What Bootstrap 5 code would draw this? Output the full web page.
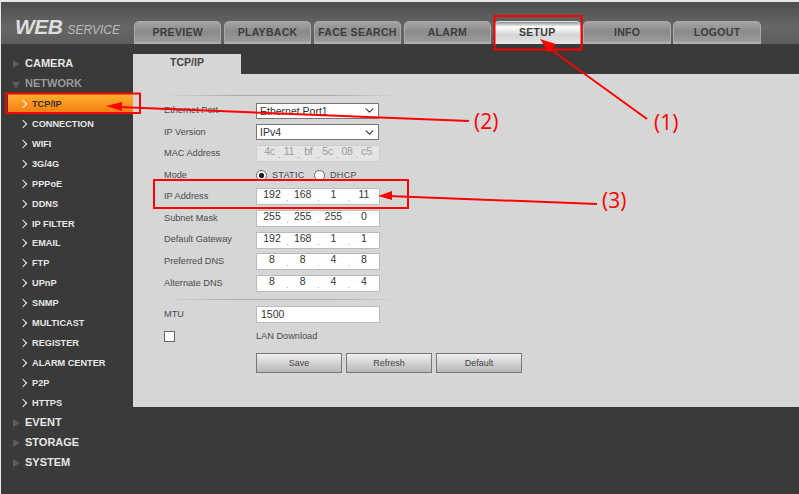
<!DOCTYPE html>
<html lang="en">
<head>
<meta charset="UTF-8">
<title>WEB SERVICE - TCP/IP</title>
<link href="https://cdn.jsdelivr.net/npm/bootstrap@5.3.0/dist/css/bootstrap.min.css" rel="stylesheet">
<style>
html, body { height: 494px; overflow: hidden; }
body { background: #3a3a3a; font-family: "Liberation Sans", Arial, sans-serif; color: #444; border-top: 2px solid #e8e8e8; border-left: 1px solid #e8e8e8; position: relative; }

.topbar { height: 42px; background: linear-gradient(#4e4e4e, #666 60%, #5e5e5e); }
.brand { width: 133px; padding: 14px 0 0 14px; color: #ddd; font-style: italic; line-height: 1; white-space: nowrap; }
.brand b { font-size: 21px; letter-spacing: -.5px; }
.brand span { font-size: 12px; margin-left: 5px; color: #bbb; }
.main-tabs { gap: 2.5px; padding-top: 19px; }
.main-tab { width: 87.4px; height: 23px; line-height: 21px; text-align: center; font-size: 10.5px; font-weight: 700; letter-spacing: .3px; white-space: nowrap; color: #3c3c3c; border-radius: 5px 5px 0 0; border: 1px solid #aaa; border-bottom: 0; background: linear-gradient(#a4a4a4, #8a8a8a 45%, #999 85%, #b8b8b8); }
.main-tab.on { background: linear-gradient(#8f8f8f, #fff 22%, #d4d4d4 60%, #e8e8e8); border-color: #ddd; }

.side { width: 132px; padding-top: 10px; flex: none; }
.side-group, .side-item { height: 19.95px; line-height: 19px; white-space: nowrap; }
.side-group { font-size: 11px; font-weight: 700; color: #e6e6e6; padding-left: 24px; position: relative; }
.side-group.open { color: #9a9a9a; }
.side-group::before { content: ""; position: absolute; left: 12px; top: 6px; border-style: solid; border-width: 4.5px 0 4.5px 7px; border-color: transparent transparent transparent #5c5c5c; }
.side-group.open::before { left: 11px; top: 8px; border-width: 7px 4.5px 0 4.5px; border-color: #5c5c5c transparent transparent transparent; }
.side-item { font-size: 9.2px; font-weight: 700; color: #e8e8e8; padding-left: 31px; position: relative; line-height: 20px; }
.side-item::before { content: ""; position: absolute; left: 19px; top: 7px; width: 6px; height: 6px; border-top: 1.5px solid #eee; border-right: 1.5px solid #eee; transform: rotate(45deg); }
.side-item.on { color: #3a3020; margin-left: 7px; padding-left: 24px; background-image: linear-gradient(#ffb030, #f57a10); }
.side-item.on::before { left: 12px; }

.panel-wrap { flex: 1; padding-top: 10px; }
.sub-tab { width: 108px; height: 20px; line-height: 17px; background: #d6d6d6; color: #444; font-size: 10.5px; font-weight: 700; text-align: center; }
.panel { background: #d6d6d6; height: 333px; padding: 21px 0 0 31px; }
.fline { height: 1px; width: 235px; background: linear-gradient(90deg, #d6d6d6, #aaa 30%, #aaa 70%, #d6d6d6); }
.fline.gap { margin: 5px 0 4px; }
.frow { height: 21.55px; font-size: 9.2px; line-height: 1; color: #4a4a4a; }
.flabel { width: 92px; flex: none; }
.ffield { width: 124px; height: 17px; background-color: #fff; border: 1px solid #bbb; font-size: 10.5px; color: #333; }
.ffield.sel { width: 123px; height: 16px; padding: 0 16px 0 3px; line-height: 1; border-radius: 0; border-color: #777; background-position: right 3px center; background-size: 11px 9px; min-height: 0; box-shadow: none; font-size: 10.5px; color: #333; }
.octets { padding: 0 4px; }
.octets span { width: 22px; text-align: center; }
.octets i { flex: 1; text-align: center; font-style: normal; font-size: 8px; padding-top: 6px; color: #777; }
.ffield.off { background-color: #e4e4e4; color: #9a9a9a; border-color: #ccc; }
.ffield.off span { letter-spacing: -.2px; }
.ffield.mtu { padding-left: 4px; line-height: 15px; }
.rad { width: 11px; height: 11px; margin: 0 5px 0 0; border: 1px solid #666; background: #fff; flex: none; }
.rad.form-check-input:checked { background: radial-gradient(circle, #222 0 2.3px, #fff 3px); border-color: #666; }
.rad-label { width: 32px; margin-right: 10px; letter-spacing: .2px; }
.form-check-input.chk { width: 11px; height: 11px; margin: 0; border: 1px solid #666; border-radius: 0; }
.fbtns { padding: 0 0 0 92px; margin-top: 6px; }
.fbtn { width: 86px; height: 20px; padding: 0; font-size: 9px; line-height: 18px; color: #444; border: 1px solid #777; border-radius: 0; background: linear-gradient(#f0f0f0, #b8b6b6); }

.notes { position: absolute; left: -1px; top: -2px; }
.note-num { position: absolute; font-family: "Open Sans", sans-serif; font-size: 21px; line-height: 1; color: #f00; }
.note-1 { left: 653px; top: 110px; }
.note-2 { left: 473px; top: 109px; }
.note-3 { left: 601px; top: 188px; }
</style>
</head>
<body>
<div class="topbar d-flex">
  <div class="brand"><b>WEB</b><span>SERVICE</span></div>
  <div class="main-tabs d-flex">
    <div class="main-tab">PREVIEW</div>
    <div class="main-tab">PLAYBACK</div>
    <div class="main-tab">FACE SEARCH</div>
    <div class="main-tab">ALARM</div>
    <div class="main-tab on">SETUP</div>
    <div class="main-tab">INFO</div>
    <div class="main-tab">LOGOUT</div>
  </div>
</div>
<div class="d-flex">
  <div class="side">
    <div class="side-group">CAMERA</div>
    <div class="side-group open">NETWORK</div>
    <div class="side-item on">TCP/IP</div>
    <div class="side-item">CONNECTION</div>
    <div class="side-item">WIFI</div>
    <div class="side-item">3G/4G</div>
    <div class="side-item">PPPoE</div>
    <div class="side-item">DDNS</div>
    <div class="side-item">IP FILTER</div>
    <div class="side-item">EMAIL</div>
    <div class="side-item">FTP</div>
    <div class="side-item">UPnP</div>
    <div class="side-item">SNMP</div>
    <div class="side-item">MULTICAST</div>
    <div class="side-item">REGISTER</div>
    <div class="side-item">ALARM CENTER</div>
    <div class="side-item">P2P</div>
    <div class="side-item">HTTPS</div>
    <div class="side-group">EVENT</div>
    <div class="side-group">STORAGE</div>
    <div class="side-group">SYSTEM</div>
  </div>
  <div class="panel-wrap">
    <div class="sub-tab">TCP/IP</div>
    <div class="panel">
      <div class="fline mb-1"></div>
      <div class="frow d-flex align-items-center">
        <div class="flabel">Ethernet Port</div>
        <select class="form-select ffield sel"><option>Ethernet Port1</option></select>
      </div>
      <div class="frow d-flex align-items-center">
        <div class="flabel">IP Version</div>
        <select class="form-select ffield sel"><option>IPv4</option></select>
      </div>
      <div class="frow d-flex align-items-center">
        <div class="flabel">MAC Address</div>
        <div class="ffield off octets d-flex"><span>4c</span><i>.</i><span>11</span><i>.</i><span>bf</span><i>.</i><span>5c</span><i>.</i><span>08</span><i>.</i><span>c5</span></div>
      </div>
      <div class="frow d-flex align-items-center">
        <div class="flabel">Mode</div>
        <input class="form-check-input rad" type="radio" name="mode" checked>
        <span class="rad-label">STATIC</span>
        <input class="form-check-input rad" type="radio" name="mode">
        <span class="rad-label">DHCP</span>
      </div>
      <div class="frow d-flex align-items-center">
        <div class="flabel">IP Address</div>
        <div class="ffield octets d-flex"><span>192</span><i>.</i><span>168</span><i>.</i><span>1</span><i>.</i><span>11</span></div>
      </div>
      <div class="frow d-flex align-items-center">
        <div class="flabel">Subnet Mask</div>
        <div class="ffield octets d-flex"><span>255</span><i>.</i><span>255</span><i>.</i><span>255</span><i>.</i><span>0</span></div>
      </div>
      <div class="frow d-flex align-items-center">
        <div class="flabel">Default Gateway</div>
        <div class="ffield octets d-flex"><span>192</span><i>.</i><span>168</span><i>.</i><span>1</span><i>.</i><span>1</span></div>
      </div>
      <div class="frow d-flex align-items-center">
        <div class="flabel">Preferred DNS</div>
        <div class="ffield octets d-flex"><span>8</span><i>.</i><span>8</span><i>.</i><span>4</span><i>.</i><span>8</span></div>
      </div>
      <div class="frow d-flex align-items-center">
        <div class="flabel">Alternate DNS</div>
        <div class="ffield octets d-flex"><span>8</span><i>.</i><span>8</span><i>.</i><span>4</span><i>.</i><span>4</span></div>
      </div>
      <div class="fline gap"></div>
      <div class="frow d-flex align-items-center">
        <div class="flabel">MTU</div>
        <div class="ffield mtu">1500</div>
      </div>
      <div class="frow d-flex align-items-center">
        <div class="flabel"><input class="form-check-input chk" type="checkbox"></div>
        <div>LAN Download</div>
      </div>
      <div class="fbtns d-flex gap-1">
        <button class="btn fbtn" type="button">Save</button>
        <button class="btn fbtn" type="button">Refresh</button>
        <button class="btn fbtn" type="button">Default</button>
      </div>
    </div>
  </div>
</div>

<svg class="notes" width="799" height="494" fill="none" stroke="#f00" stroke-width="2">
  <rect x="494.5" y="16" width="87" height="33.5"/>
  <rect x="6" y="93.5" width="134" height="19.5"/>
  <rect x="154" y="180" width="254" height="28"/>
  <path d="M647 119 546 46"/>
  <path d="M469 121 118 107"/>
  <path d="M597 204 388 196"/>
  <g fill="#f00" stroke="none">
    <path d="M540 39 556 44 549 53Z"/>
    <path d="M106 106 122 102 122 111Z"/>
    <path d="M378 196 392 191 392 200Z"/>
  </g>
</svg>
<span class="note-num note-1">(1)</span>
<span class="note-num note-2">(2)</span>
<span class="note-num note-3">(3)</span>

<script src="https://cdn.jsdelivr.net/npm/bootstrap@5.3.0/dist/js/bootstrap.bundle.min.js"></script>
</body>
</html>
